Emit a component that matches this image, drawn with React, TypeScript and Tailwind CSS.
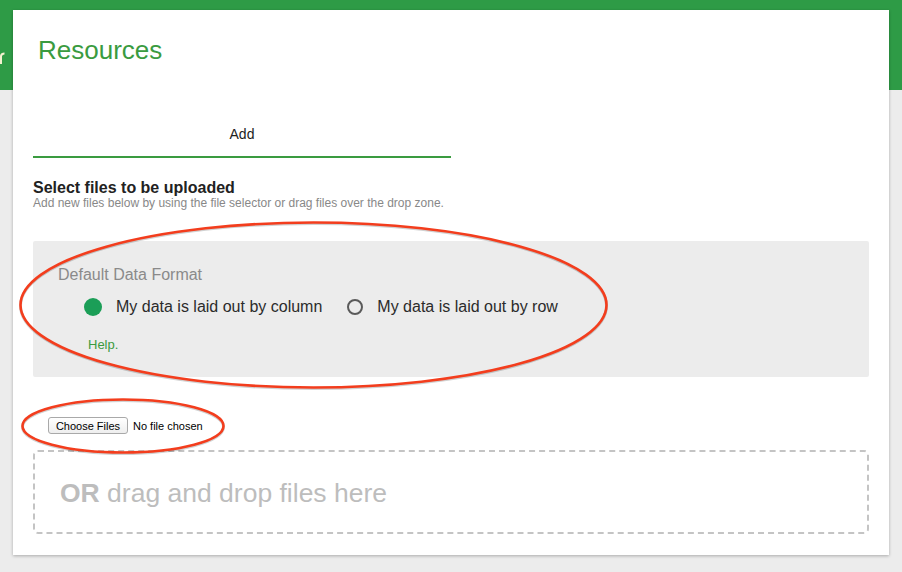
import React from "react";

export default function App() {
  return (
    <div className="relative w-[902px] h-[572px] overflow-hidden bg-[#ececec] font-['Liberation_Sans',Arial,sans-serif]">
      {/* green header band */}
      <div className="relative h-[90px] bg-[#2e9b46]">
        <svg className="absolute left-0 top-[51px]" width="5" height="14" viewBox="0 0 5 14">
          <path d="M1 13 V5 Q1.5 2.5 4.5 2.5" fill="none" stroke="#f4f1d0" strokeWidth="2" />
        </svg>
      </div>

      {/* card */}
      <div className="relative -mt-[80px] mx-[13px] bg-white shadow-[0_1px_3px_rgba(0,0,0,0.28)] px-5 pt-[27px] pb-[21px]">
        <h1 className="ml-[5px] text-[26px] leading-[26px] text-[#3a9b40]">Resources</h1>

        <div className="mt-[61px] w-[418px] border-b-2 border-[#3a9b40] pb-[12px] text-center text-[14px] leading-[20px] text-[#222]">
          Add
        </div>

        <div className="mt-[20px] text-[16px] leading-[20px] font-bold text-[#222]">Select files to be uploaded</div>
        <div className="-mt-[2px] text-[12px] leading-[14px] text-[#888]">
          Add new files below by using the file selector or drag files over the drop zone.
        </div>

        <div className="mt-[31px] h-[136px] rounded-[2px] bg-[#ececec] pl-[25px] pt-[24px]">
          <div className="text-[16px] leading-[20px] text-[#8a8a8a]">Default Data Format</div>
          <div className="mt-[12px] flex items-center pl-[26px] text-[16px] leading-[20px] text-[#2b2b2b]">
            <span className="h-[18px] w-[18px] rounded-full bg-[#1b9e57]" />
            <span className="ml-[14px]">My data is laid out by column</span>
            <span className="ml-[25px] h-[16px] w-[16px] rounded-full border-2 border-[#5a5a5a]" />
            <span className="ml-[14px]">My data is laid out by row</span>
          </div>
          <div className="mt-[20px] pl-[30px] text-[13px] leading-[16px] text-[#3a9b40]">Help.</div>
        </div>

        <div className="mt-[40px] flex items-start pl-[15px] text-[11px] text-black">
          <span className="flex h-[17px] w-[80px] items-center justify-center rounded-[3px] border border-[#a9a9a9] bg-gradient-to-b from-white to-[#eeeeee] pt-[2px] leading-[13px]">
            Choose Files
          </span>
          <span className="ml-[5px] pt-[3px] leading-[13px]">No file chosen</span>
        </div>

        <div className="mt-[16px] flex h-[84px] items-center rounded-[5px] border-2 border-dashed border-[#c4c4c4] pl-[25px] pt-[2px] text-[26.5px] leading-[27px] text-[#bdbdbd]">
          <span>
            <span className="font-bold">OR</span> drag and drop files here
          </span>
        </div>
      </div>

      {/* annotation ellipses */}
      <svg className="pointer-events-none absolute inset-0" width="902" height="572" viewBox="0 0 902 572">
        <ellipse cx="313.5" cy="306" rx="293" ry="82.5" fill="none" stroke="rgba(0,0,0,0.18)" strokeWidth="3" />
        <ellipse cx="313.5" cy="305" rx="293" ry="82.5" fill="none" stroke="#f33d1d" strokeWidth="2.6" />
        <ellipse cx="123" cy="427" rx="100.5" ry="26.5" fill="none" stroke="rgba(0,0,0,0.18)" strokeWidth="3" />
        <ellipse cx="123" cy="426" rx="100.5" ry="26.5" fill="none" stroke="#f33d1d" strokeWidth="2.6" />
      </svg>
    </div>
  );
}
